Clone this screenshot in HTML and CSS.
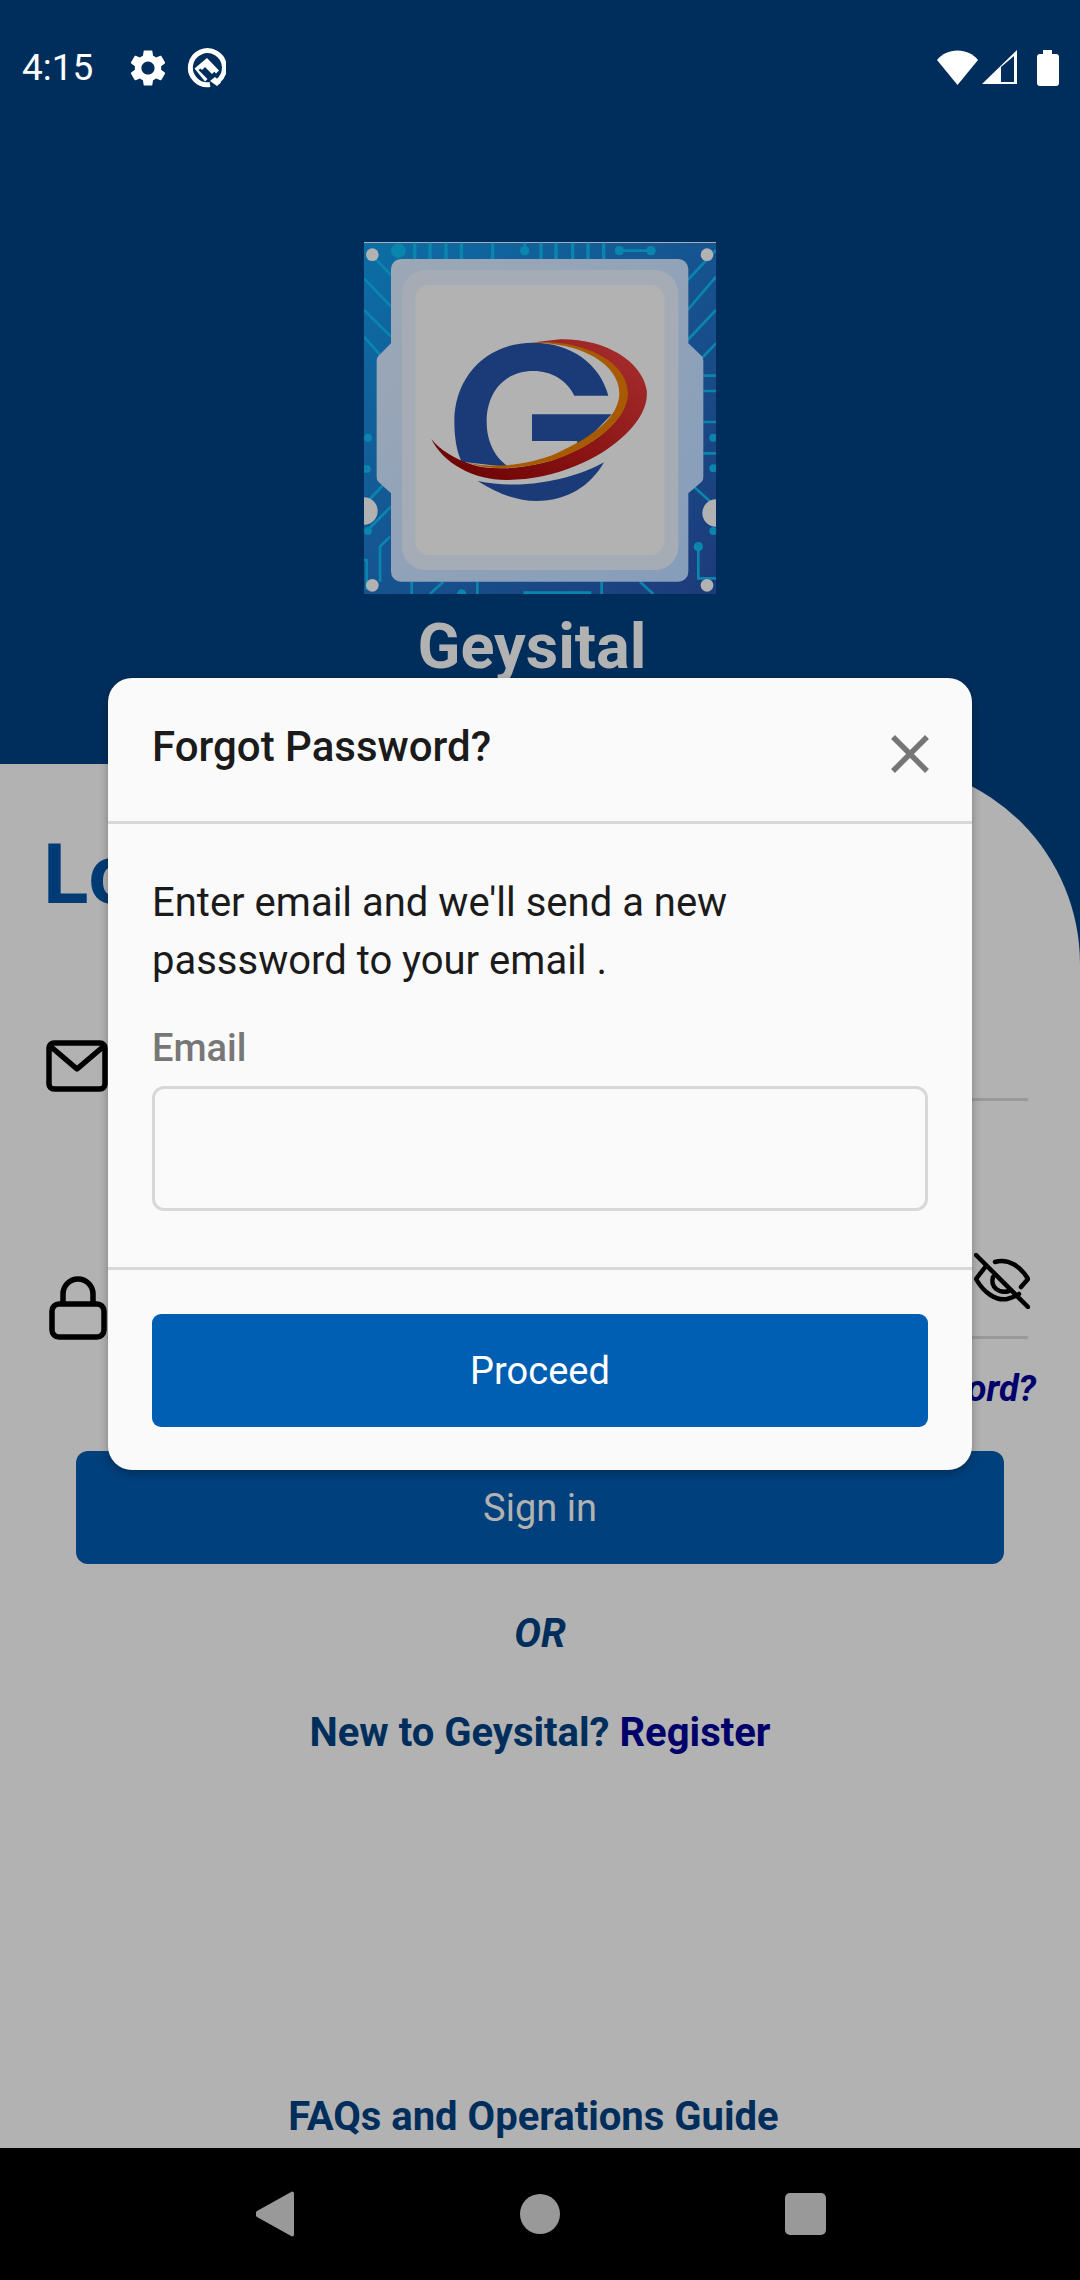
FILE: index.html
```html
<!DOCTYPE html>
<html lang="en">
<head>
<meta charset="utf-8">
<title>Geysital</title>
<link rel="stylesheet" href="styles.css">
</head>
<body>
<div class="screen">
  <header class="status">
    <div class="status-left">
      <span class="clock">4:15</span>
      <svg class="ic-gear" viewBox="0 0 24 24"><path fill="#fff" d="M19.14 12.94c.04-.3.06-.61.06-.94 0-.32-.02-.64-.07-.94l2.03-1.58c.18-.14.23-.41.12-.61l-1.92-3.32c-.12-.22-.37-.29-.59-.22l-2.39.96c-.5-.38-1.03-.7-1.62-.94l-.36-2.54c-.04-.24-.24-.41-.48-.41h-3.84c-.24 0-.43.17-.47.41l-.36 2.54c-.59.24-1.13.57-1.62.94l-2.39-.96c-.22-.08-.47 0-.59.22L2.74 8.87c-.12.21-.08.47.12.61l2.03 1.58c-.05.3-.09.63-.09.94s.02.64.07.94l-2.03 1.58c-.18.14-.23.41-.12.61l1.92 3.32c.12.22.37.29.59.22l2.39-.96c.5.38 1.03.7 1.62.94l.36 2.54c.05.24.24.41.48.41h3.84c.24 0 .44-.17.47-.41l.36-2.54c.59-.24 1.13-.56 1.62-.94l2.39.96c.22.08.47 0 .59-.22l1.92-3.32c.12-.22.07-.47-.12-.61l-2.01-1.58zM12 15.6c-1.98 0-3.6-1.62-3.6-3.6s1.62-3.6 3.6-3.6 3.6 1.62 3.6 3.6-1.62 3.6-3.6 3.6z"/></svg>
      <svg class="ic-q" viewBox="0 0 40 40"><path fill="none" stroke="#fff" stroke-width="5" d="M32 33A17 17 0 1 0 24 36.5"/><path fill="#fff" d="M24 33l5-4 6 5.500-4 3.500zM8.500 20.500L21 10l12 12.500-3 3L21 16l-8.500 6 9 9-2.500 2.500z"/><path fill="#fff" d="M14 20l7-6 8 9-3 3-7-7-3 3z"/></svg>
    </div>
    <div class="status-right">
      <svg class="ic-wifi" viewBox="0 0 41 35"><path fill="#fff" d="M0 10C5 4 12 .5 20.500.5S36 4 41 10L20.500 35z"/></svg>
      <svg class="ic-signal" viewBox="0 0 35 35"><path fill="#fff" fill-rule="evenodd" d="M0 34L35 0v34zM19 17v15h13V6z"/></svg>
      <svg class="ic-battery" viewBox="0 0 22 36"><path fill="#fff" d="M6 0h9v4h4a3 3 0 0 1 3 3v26a3 3 0 0 1-3 3H3a3 3 0 0 1-3-3V7a3 3 0 0 1 3-3h3z"/></svg>
    </div>
  </header>

  <section class="hero">
    <svg class="logo" viewBox="0 0 352 352">
      <defs>
        <linearGradient id="pcb" x1="0" y1="0" x2="1" y2="1"><stop offset="0" stop-color="#0C6EA6"/><stop offset="1" stop-color="#1E3A7A"/></linearGradient>
        <linearGradient id="chip" x1="0" y1="0" x2="1" y2="1"><stop offset="0" stop-color="#9DA8B6"/><stop offset="1" stop-color="#859DBB"/></linearGradient>
        <linearGradient id="red" x1="1" y1="0" x2="0" y2="1"><stop offset="0" stop-color="#A93030"/><stop offset=".55" stop-color="#8A1414"/><stop offset="1" stop-color="#660000"/></linearGradient>
      </defs>
      <g transform="translate(-24 -22) scale(.33333)">
        <rect x="72" y="66" width="1056" height="1056" fill="url(#pcb)"/>
        <rect x="72" y="66" width="1056" height="3" fill="#aab0b6"/>
        <g fill="none" stroke="#0A86AE" stroke-width="8">
          <path d="M224 68v50M270 68v50M318 68v50M364 68v50M458 68v50M603 68v50M648 68v50M698 68v50M744 68v50M791 68v50" stroke-width="10"/>
          <path d="M838 92h95M554 68v24M1128 90l-85 90M1128 170l-85 100M1128 270l-85 90M1128 370l-48 50M72 175l81 85M72 270l81 80M72 350l53 60M100 110l53 55M1090 467h38M1090 513h38M1090 606h38M1090 700h38M72 655h13M1120 653h8M72 747h13M1120 745h8M130 795l-58 60M153 860l-70 70M1050 790l78 70M1075 980v95h53M72 1020h8v90M120 1085v-105l30-30M900 1085l40 37M215 1085v37M310 1085l-40 37M412 1085v37M785 1085v37M550 1118h200v4"/>
        </g>
        <g fill="#0A86AE">
          <circle cx="175" cy="92" r="22"/><circle cx="554" cy="92" r="14"/><circle cx="838" cy="92" r="14"/><circle cx="933" cy="92" r="14"/>
          <circle cx="84" cy="653" r="12"/><circle cx="1120" cy="653" r="12"/><circle cx="80" cy="747" r="12"/><circle cx="1120" cy="745" r="12"/><circle cx="84" cy="933" r="12"/><circle cx="1120" cy="933" r="12"/><circle cx="1075" cy="980" r="14"/><circle cx="365" cy="1122" r="14"/>
        </g>
        <g fill="#B2B2B2">
          <circle cx="97" cy="104" r="19"/><circle cx="1101" cy="104" r="19"/><circle cx="97" cy="1096" r="19"/><circle cx="1101" cy="1096" r="19"/>
          <path d="M72 832a41 41 0 0 1 0 82zM1128 838a41 41 0 0 0 0 82z"/>
        </g>
        <path fill="url(#chip)" d="M183 117H1015a30 30 0 0 1 30 30V370l40 38q5 5 5 15V770q0 10-5 15l-40 35V1055a30 30 0 0 1-30 30H183a30 30 0 0 1-30-30V820l-38-35q-5-5-5-15V423q0-10 5-15l38-38V147a30 30 0 0 1 30-30z"/>
        <rect x="186" y="150" width="829" height="900" rx="70" fill="#A6ACB6"/>
        <rect x="226" y="195" width="747" height="810" rx="42" fill="#B2B2B2"/>
        <g fill="#1B3B78">
          <path d="M805 527C780 430 690 368 580 368 440 368 343 470 343 605c0 45 7 90 22 120l145 17C470 720 440 670 440 605c0-90 55-152 140-152 55 0 100 27 123 74z"/>
          <path d="M576 583H815L760 640 705 690 712 663H576z"/>
          <path d="M413 783c57 37 117 60 177 60 90 0 160-43 202-116-72 43-232 88-379 56z"/>
        </g>
        <path fill="url(#red)" d="M274 657C310 730 400 780 500 780 640 780 780 720 860 640 905 595 925 550 920 510 905 420 790 355 660 358L570 368C700 358 860 420 862 520 862 600 760 680 640 720 540 750 450 750 400 735 340 715 300 690 274 657z"/>
        <path fill="#A85A00" d="M570 368C720 355 862 420 864 520 864 595 770 675 650 717 560 745 450 755 385 728 460 745 560 738 650 700 760 650 838 590 838 520 838 430 720 365 570 368z"/>
      </g>
    </svg>
    <h1 class="brand">Geysital</h1>
  </section>

  <main class="sheet">
    <h2 class="login-title">Login</h2>
    <div class="field field-email">
      <svg class="ic-mail" viewBox="0 0 62 52"><path fill="none" stroke="#000" stroke-width="5.500" stroke-linejoin="round" stroke-linecap="round" d="M8 3H54a5 5 0 0 1 5 5V44a5 5 0 0 1-5 5H8a5 5 0 0 1-5-5V8a5 5 0 0 1 5-5zM4 6l27 23L58 6"/></svg>
      <div class="field-line"></div>
    </div>
    <div class="field field-pass">
      <svg class="ic-lock" viewBox="0 0 58 64"><path fill="none" stroke="#000" stroke-width="5.500" stroke-linejoin="round" d="M10 28H48a7 7 0 0 1 7 7V54a7 7 0 0 1-7 7H10a7 7 0 0 1-7-7V35a7 7 0 0 1 7-7zM14 28V18a15 15 0 0 1 30 0V28"/></svg>
      <div class="field-line">
        <svg class="ic-eye" viewBox="0 0 56 56"><g fill="none" stroke="#000" stroke-width="4.500" stroke-linecap="round" stroke-linejoin="round"><path d="M2 2l52 52"/><path d="M21 9c14-4 26 5 33 17l-7 8M12 13L2 26c8 14 20 22 31 20 4-1 8-2 12-5"/><path d="M19 24c-3 10 6 17 16 14"/></g></svg>
      </div>
    </div>
    <div class="forgot-row"><a class="forgot">Forgot Password?</a></div>
    <button class="signin">Sign in</button>
    <p class="or">OR</p>
    <p class="register">New to Geysital? <a class="register-link">Register</a></p>
    <p class="faqs">FAQs and Operations Guide</p>
  </main>

  <nav class="navbar">
    <svg class="nav-back" viewBox="0 0 38 46"><path fill="#999" d="M36 .5a2 2 0 0 1 2 2V43.500a2 2 0 0 1-2 2L1 26a4 4 0 0 1 0-6z"/></svg>
    <span class="nav-home"></span>
    <span class="nav-recent"></span>
  </nav>

  <div class="modal">
    <div class="modal-head">
      <h3 class="modal-title">Forgot Password?</h3>
      <svg class="ic-close" viewBox="0 0 38 38"><path fill="none" stroke="#767676" stroke-width="5.500" d="M2 2l34 34M36 2L2 36"/></svg>
    </div>
    <div class="modal-body">
      <p class="modal-text">Enter email and we'll send a new passsword to your email .</p>
      <label class="modal-label">Email</label>
      <div class="modal-input"></div>
    </div>
    <div class="modal-foot">
      <button class="proceed">Proceed</button>
    </div>
  </div>
</div>
</body>
</html>
```
FILE: styles.css
```css
* { box-sizing: border-box; }
html, body { margin: 0; padding: 0; }
body { font-family: Roboto, "Liberation Sans", sans-serif; }
svg { display: block; }
h1, h2, h3, p { margin: 0; }

.screen {
  position: relative;
  width: 1080px;
  height: 2280px;
  overflow: hidden;
  display: flex;
  flex-direction: column;
  background: #002E5C;
}

/* status bar */
.status {
  height: 134px;
  padding: 48px 21px 0 22px;
  display: flex;
  justify-content: space-between;
  align-items: flex-start;
  flex: none;
}
.status-left, .status-right { display: flex; align-items: center; height: 39px; }
.clock { font-size: 37px; line-height: 39px; color: #fff; width: 104px; }
.ic-gear { width: 44px; height: 44px; margin-left: 0; }
.ic-q { width: 40px; height: 40px; margin-left: 16px; }
.ic-wifi { width: 41px; height: 35px; }
.ic-signal { width: 35px; height: 35px; margin-left: 4px; }
.ic-battery { width: 22px; height: 36px; margin-left: 20px; }

/* hero */
.hero {
  height: 630px;
  flex: none;
  display: flex;
  flex-direction: column;
  align-items: center;
  padding-top: 108px;
}
.logo { width: 352px; height: 352px; }
.brand {
  margin: 16px 16px 0 0;
  font-size: 63px;
  line-height: 74px;
  font-weight: 700;
  color: #B2B2B2;
}

/* login sheet */
.sheet {
  flex: 1;
  min-height: 0;
  display: flex;
  flex-direction: column;
  background: #B2B2B2;
  border-top-right-radius: 200px;
}
.login-title {
  margin: 62px 0 0 43px;
  font-size: 84px;
  line-height: 98px;
  font-weight: 700;
  color: #003B75;
}
.field { position: relative; display: flex; }
.field-email { height: 133px; margin-top: 116px; padding: 0 52px 0 46px; align-items: flex-start; }
.field-pass { height: 166px; padding: 0 52px 0 49px; align-items: flex-start; }
.field-line {
  flex: 1;
  height: 100%;
  border-bottom: 3px solid #999;
  position: relative;
}
.field-email .field-line { height: 61px; margin-left: 0; }
.ic-mail { width: 62px; height: 52px; flex: none; }
.ic-lock { width: 58px; height: 64px; flex: none; margin-top: 103px; }
.field-pass .field-line { height: 166px; }
.ic-eye { position: absolute; right: -2px; top: 80px; width: 56px; height: 56px; }

.forgot-row { display: flex; justify-content: flex-end; padding-right: 44px; margin-top: 28px; }
.forgot {
  font-size: 36px;
  line-height: 44px;
  font-weight: 700;
  font-style: italic;
  color: #00006B;
}
.signin {
  margin: 40px 76px 0;
  height: 113px;
  border: 0;
  border-radius: 12px;
  background: #00407C;
  color: #B2B2B2;
  font-family: inherit;
  font-size: 38px;
}
.or {
  margin-top: 46px;
  text-align: center;
  font-size: 40px;
  line-height: 47px;
  font-weight: 700;
  font-style: italic;
  color: #002E5C;
}
.register {
  margin-top: 52px;
  text-align: center;
  font-size: 40px;
  line-height: 47px;
  font-weight: 700;
  color: #002E5C;
}
.register-link { color: #00006B; }
.faqs {
  margin-top: 337px;
  padding-right: 13px;
  text-align: center;
  font-size: 40px;
  line-height: 47px;
  font-weight: 700;
  color: #002E5C;
}

/* navigation bar */
.navbar {
  height: 132px;
  flex: none;
  background: #000;
  position: relative;
  display: grid;
  grid-template-columns: 1fr 1fr 1fr;
  padding: 0 142px 0 142px;
  align-items: center;
  justify-items: center;
}
.nav-back { width: 38px; height: 46px; margin-bottom: renamed; }
.nav-home { width: 40px; height: 40px; border-radius: 50%; background: #999; }
.nav-recent { width: 41px; height: 42px; border-radius: 5px; background: #999; }

/* dialog */
.modal {
  position: absolute;
  left: 108px;
  top: 678px;
  width: 864px;
  height: 792px;
  display: flex;
  flex-direction: column;
  background: #FAFAFA;
  border-radius: 24px;
  box-shadow: 0 3px 10px rgba(0, 0, 0, .3);
}
.modal-head {
  height: 146px;
  flex: none;
  padding: 0 43px 0 44px;
  display: flex;
  justify-content: space-between;
  align-items: flex-start;
  border-bottom: 3px solid #D8D8D8;
}
.modal-title {
  margin-top: 44px;
  font-size: 42px;
  line-height: 50px;
  font-weight: 500;
  color: #1B1B1B;
}
.ic-close { width: 38px; height: 38px; margin-top: 57px; }
.modal-body { flex: 1; padding: 50px 44px 0; }
.modal-text {
  font-size: 40px;
  line-height: 58px;
  color: #1B1B1B;
}
.modal-label {
  display: block;
  margin-top: 36px;
  font-size: 38px;
  line-height: 45px;
  font-weight: 500;
  color: #777;
}
.modal-input {
  margin-top: 15px;
  height: 125px;
  border: 3px solid #D8D8D8;
  border-radius: 12px;
}
.modal-foot {
  height: 203px;
  flex: none;
  padding: 44px 44px 0;
  border-top: 3px solid #D8D8D8;
}
.proceed {
  display: block;
  width: 100%;
  height: 113px;
  border: 0;
  border-radius: 9px;
  background: #005EB3;
  color: #fff;
  font-family: inherit;
  font-size: 38px;
}
```
